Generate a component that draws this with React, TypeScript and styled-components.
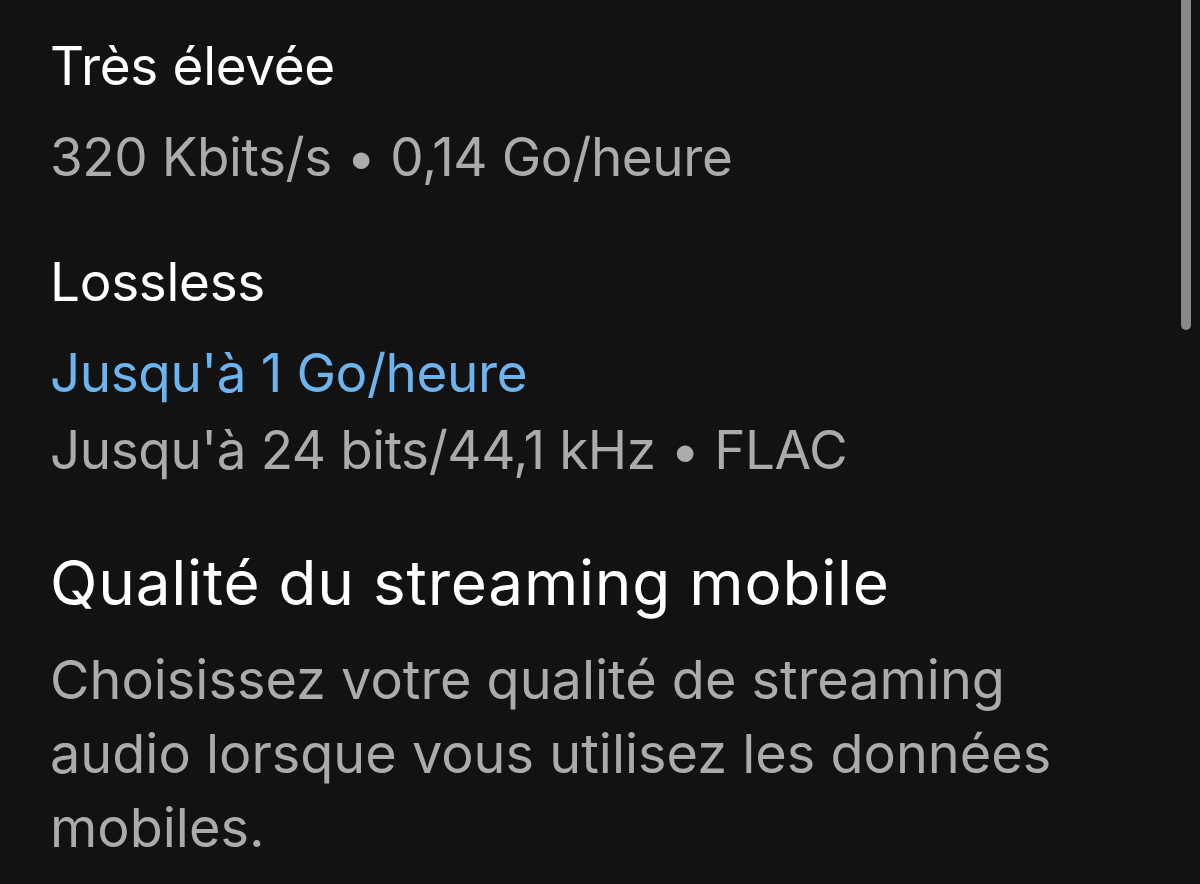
import React from "react";
import styled, { createGlobalStyle } from "styled-components";

const GlobalStyle = createGlobalStyle`
  html, body {
    margin: 0;
    padding: 0;
    background: #121212;
  }
  body {
    font-family: Inter, "Noto Sans", "Liberation Sans", sans-serif;
    -webkit-font-smoothing: antialiased;
  }
`;

interface quality {
  title: string;
  highlight?: string;
  detail: string;
}

const qualities: quality[] = [
  { title: "Très élevée", detail: "320 Kbits/s • 0,14 Go/heure" },
  {
    title: "Lossless",
    highlight: "Jusqu'à 1 Go/heure",
    detail: "Jusqu'à 24 bits/44,1 kHz • FLAC",
  },
];

export default function App() {
  return (
    <Screen>
      <GlobalStyle />
      <Content>
        <OptionList>
          {qualities.map((q) => (
            <Option key={q.title}>
              <OptionTitle>{q.title}</OptionTitle>
              {q.highlight && <Line $accent>{q.highlight}</Line>}
              <Line>{q.detail}</Line>
            </Option>
          ))}
        </OptionList>
        <Section>
          <SectionTitle>Qualité du streaming mobile</SectionTitle>
          <Description>
            Choisissez votre qualité de streaming audio lorsque vous utilisez
            les données mobiles.
          </Description>
        </Section>
      </Content>
      <Scrollbar />
    </Screen>
  );
}

const Screen = styled.div`
  position: relative;
  width: 1200px;
  height: 884px;
  overflow: hidden;
  background: #121212;
`;

const Content = styled.div`
  display: flex;
  flex-direction: column;
  padding: 28px 90px 0 50px;
`;

const OptionList = styled.div`
  display: flex;
  flex-direction: column;
  gap: 48px;
`;

const Option = styled.div`
  display: flex;
  flex-direction: column;
`;

const OptionTitle = styled.div`
  color: #ffffff;
  font-size: 53px;
  line-height: 77px;
  letter-spacing: -0.3px;
  margin-bottom: 14px;
`;

const Line = styled.div<{ $accent?: boolean }>`
  color: ${(p) => (p.$accent ? "#6db3ee" : "#ababab")};
  font-size: 53px;
  line-height: 77px;
  letter-spacing: -0.4px;
`;

const Section = styled.div`
  display: flex;
  flex-direction: column;
  margin-top: 54px;
`;

const SectionTitle = styled.div`
  color: #ffffff;
  font-size: 62px;
  line-height: 80px;
  letter-spacing: 0.8px;
  margin-bottom: 20px;
`;

const Description = styled.div`
  color: #ababab;
  font-size: 54px;
  line-height: 74px;
`;

const Scrollbar = styled.div`
  position: absolute;
  top: 0;
  left: 1181px;
  width: 10px;
  height: 330px;
  border-radius: 0 0 5px 5px;
  background: #8a8a8a;
`;
